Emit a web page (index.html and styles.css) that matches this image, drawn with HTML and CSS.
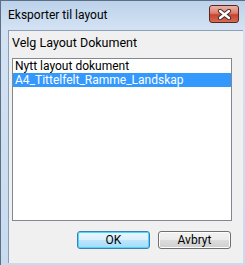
FILE: index.html
```html
<!DOCTYPE html>
<html lang="no">
<head>
    <meta charset="UTF-8">
    <title>Eksporter til layout</title>
    <link rel="stylesheet" href="styles.css">
</head>
<body>
    <div class="window">
        <div class="titlebar">
            <span class="title">Eksporter til layout</span>
            <div class="close">
                <svg width="15" height="11" viewBox="0 0 15 11">
                    <path d="M3 2 L12 9 M12 2 L3 9" stroke="#3b2b2b" stroke-width="4.2" stroke-linecap="round"/>
                    <path d="M3 2 L12 9 M12 2 L3 9" stroke="#ffffff" stroke-width="2.4" stroke-linecap="round"/>
                </svg>
            </div>
        </div>
        <div class="client">
            <div class="label">Velg Layout Dokument</div>
            <div class="listbox">
                <div class="item">Nytt layout dokument</div>
                <div class="item selected">A4_Tittelfelt_Ramme_Landskap</div>
            </div>
            <div class="buttons">
                <button class="btn default">OK</button>
                <button class="btn">Avbryt</button>
            </div>
        </div>
    </div>
</body>
</html>
```
FILE: styles.css
```css
body {
    margin: 0;
    font-family: Roboto, "Noto Sans", sans-serif;
    font-size: 12px;
    color: #000;
}

.window {
    width: 245px;
    height: 265px;
    box-sizing: border-box;
    display: flex;
    flex-direction: column;
    border-left: 1px solid #5b6f87;
    border-top: 1px solid #5b6f87;
    background: linear-gradient(to bottom, #bcd2ea 0px, #d3e2f3 28px, #c9dbef 100%);
    padding: 0 2px 2px 7px;
}

.titlebar {
    height: 29px;
    display: flex;
    align-items: flex-start;
    justify-content: space-between;
    padding-right: 4px;
}

.title {
    margin-top: 6px;
    line-height: 16px;
    font-size: 12px;
    color: #000;
}

.close {
    margin-top: 4px;
    width: 28px;
    height: 16px;
    border: 1px solid #5a2424;
    border-radius: 3px;
    background: linear-gradient(to bottom, #eeb2a6 0%, #dc7e6e 45%, #c7442f 55%, #d86a52 100%);
    display: flex;
    align-items: center;
    justify-content: center;
}

.client {
    flex: 1;
    background: #f0f0f0;
    border: 1px solid #8ba0b8;
    border-right: none;
    border-bottom: none;
    padding: 4px 11px 0 3px;
    display: flex;
    flex-direction: column;
}

.label {
    height: 23px;
    line-height: 16px;
    font-size: 12.5px;
}

.listbox {
    width: 220px;
    height: 163px;
    box-sizing: border-box;
    border: 1px solid #828790;
    background: #fff;
}

.item {
    height: 14px;
    line-height: 14px;
    padding-left: 2px;
    white-space: nowrap;
}

.selected {
    background: #3399ff;
    color: #fff;
}

.buttons {
    display: flex;
    justify-content: flex-end;
    gap: 8px;
    margin-top: 10px;
    padding-right: 1px;
}

.btn {
    width: 73px;
    height: 18px;
    padding: 0;
    font-family: inherit;
    font-size: 12px;
    line-height: 14px;
    color: #000;
    border: 1px solid #707070;
    border-radius: 3px;
    background: linear-gradient(to bottom, #f2f2f2 0%, #ebebeb 50%, #dddddd 51%, #cfcfcf 100%);
    box-shadow: inset 0 0 0 1px #fcfcfc;
}

.default {
    border-color: #3c7fb1;
    background: linear-gradient(to bottom, #eaf6fd 0%, #d9f0fc 50%, #bee6fd 51%, #a7d9f5 100%);
    box-shadow: inset 0 0 0 1px #48d8fb;
}
```
